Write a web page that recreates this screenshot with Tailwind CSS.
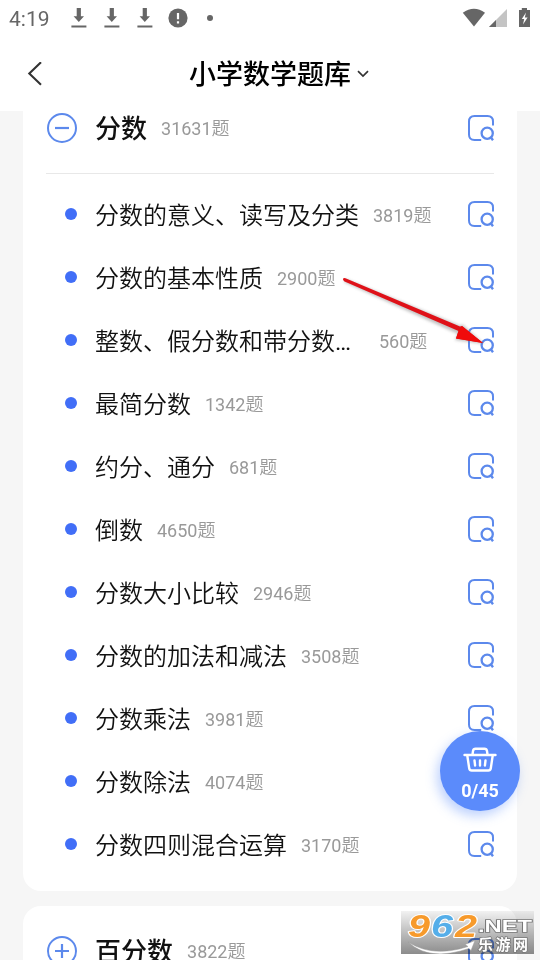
<!DOCTYPE html>
<html lang="zh-CN">
<head>
<meta charset="utf-8">
<title>小学数学题库</title>
<script src="https://cdn.jsdelivr.net/npm/@tailwindcss/browser@4"></script>
</head>
<body class="relative h-[960px] w-[540px] overflow-hidden bg-[#f6f6f6] font-[Roboto,'Noto_Sans_CJK_SC',sans-serif] text-[#111]">
<svg class="hidden">
  <symbol id="search" viewBox="0 0 28 28"><g fill="none" stroke="#5c89ec" stroke-width="2"><path d="M14.2 26H7.5Q2 26 2 20.5V7.5Q2 2 7.5 2H20.5Q26 2 26 7.5V11.5"/><circle cx="20.2" cy="19.2" r="5.6" stroke-width="2.3"/><path d="m23.6 23 2.4 3.2" stroke-width="2.4"/></g></symbol>
  <symbol id="download" viewBox="0 0 16 22"><path d="M5.7 1h4.2v8.2H13L7.8 15 2.6 9.2h3.1zM.4 18.6h15v2H.4z" fill="#666"/></symbol>
</svg>

<header class="flex h-[111px] flex-col bg-white">
  <div class="flex h-9 items-center pl-[9px] pr-[8px] text-[21px] text-[#666]">
    <span class="w-[62px] pt-0.5 leading-9">4:19</span>
    <svg class="mr-[17px] h-[22px] w-4"><use href="#download"/></svg>
    <svg class="mr-[17px] h-[22px] w-4"><use href="#download"/></svg>
    <svg class="mr-[15px] h-[22px] w-4"><use href="#download"/></svg>
    <svg class="h-5 w-5" viewBox="0 0 20 20"><circle cx="10" cy="10" r="9.6" fill="#666"/><path d="M10 5v6.3M10 13.2v2.4" stroke="#fff" stroke-width="2.2"/></svg>
    <i class="ml-[19px] h-[6px] w-[6px] rounded-full bg-[#666]"></i>
    <svg class="ml-auto h-5 w-[70px]" viewBox="0 0 70 20"><path d="M.8 4.8Q12 -3.2 23 4.8L12 18.4z" fill="#666"/><path d="M45 1v18H27z" fill="#c4c4c4"/><path d="M34 12v7h-7z" fill="#666"/><path d="M57 2h2.8V0h5.2v2h3v17H57z" fill="#666"/><path d="M64 4.5 59.8 11h2.4L61 16.5l4.6-7h-2.8z" fill="#fff"/></svg>
  </div>
  <div class="flex h-[75px] items-center pl-[27px]">
    <svg class="h-6 w-4" viewBox="0 0 16 24" fill="none" stroke="#333" stroke-width="2.1"><path d="M14 .2 2.3 11.5 14 22.8"/></svg>
    <h1 class="ml-[146px] pt-0.5 text-[27px] font-medium leading-9 text-black">小学数学题库</h1>
    <svg class="ml-[6px] h-2 w-3" viewBox="0 0 12 8" fill="none" stroke="#333" stroke-width="1.7"><path d="m1 1.2 5 4.8 5-4.8"/></svg>
  </div>
</header>

<main class="mx-[23px] flex flex-col gap-[15px]">
  <section class="h-[780px] rounded-b-[18px] bg-white px-[23px]">
    <div class="flex h-[63px] items-center border-b border-[#e8e8e8] pb-[28px]">
      <svg class="h-8 w-8" viewBox="0 0 32 32" fill="none" stroke="#5c89ec" stroke-width="2"><circle cx="16" cy="16" r="14"/><path d="M9 16h14" stroke-width="2.2"/></svg>
      <h2 class="ml-[17px] pt-0.5 text-[26px] font-medium leading-9">分数</h2>
      <span class="ml-[14px] text-[18px] text-[#999]">31631<span class="font-[350]">题</span></span>
      <svg class="ml-auto -mr-px h-7 w-7"><use href="#search"/></svg>
    </div>
    <ul id="topics" class="pt-[9px]"></ul>
  </section>
  <section class="h-[54px] rounded-t-[18px] bg-white px-[23px] pt-[27px]">
    <div class="flex h-9 items-center">
      <svg class="h-8 w-8" viewBox="0 0 32 32" fill="none" stroke="#5c89ec" stroke-width="2"><circle cx="16" cy="16" r="14"/><path d="M9 16h14M16 9v14" stroke-width="2.2"/></svg>
      <h2 class="ml-[17px] pt-0.5 text-[26px] font-medium leading-9">百分数</h2>
      <span class="ml-[14px] text-[18px] text-[#999]">3822<span class="font-[350]">题</span></span>
      <svg class="ml-auto -mr-px h-7 w-7"><use href="#search"/></svg>
    </div>
  </section>
</main>

<svg class="absolute left-[330px] top-[265px] h-[100px] w-[180px]" viewBox="0 0 180 100">
  <g fill="#777" opacity=".45" style="filter:blur(1.5px)"><path d="m14 17 2-3 115 47 1-2 22 20-29-4 3-6z"/></g>
  <path d="M13 14.5q0-2 2.5-1.3L130 61.5l2-.5L153 78l-27-4.5 2.5-7.5L14 16.2z" fill="#df1118"/>
  <path d="m132 61 21 17-27-4.5 2.5-7.5z" fill="#f00b0b"/>
</svg>

<div class="absolute left-[440px] top-[731px] flex h-20 w-20 flex-col items-center rounded-full bg-[#5b8bfb] pt-4 text-white shadow-[-3px_5px_12px_#5b8bfb66]">
  <svg class="h-[26px] w-[34px]" viewBox="0 0 34 26" fill="none" stroke="#fff" stroke-width="2.4" stroke-linecap="round" stroke-linejoin="round"><path d="M1.5 8h31M4.2 8l2 13.2q.4 2.3 2.5 2.3h16.6q2.1 0 2.5-2.3L29.8 8M9.5 7.5l.5-3.5q.4-2.2 2.5-2.2h9q2.1 0 2.5 2.2l.5 3.5M11.5 13.5l.6 5M17 13.5v5M22.5 13.5l-.6 5"/></svg>
  <span class="mt-[5px] text-[18px] font-bold leading-[26px]">0/45</span>
</div>

<div class="absolute left-[401px] top-[911px] h-[43px] w-[133px] bg-linear-to-b from-[#f2f2f2] to-[#8c8c8c] mix-blend-multiply"></div>
<svg class="absolute left-[401px] top-[911px] h-[43px] w-[133px]" viewBox="0 0 133 43">
  <g font-family="Liberation Sans, sans-serif" font-weight="bold" font-style="italic" font-size="31" stroke="#fff" stroke-width="2" paint-order="stroke" stroke-linejoin="round">
    <text x="7" y="26" textLength="22" lengthAdjust="spacingAndGlyphs" fill="#f79a2b">9</text>
    <text x="30" y="26" textLength="22" lengthAdjust="spacingAndGlyphs" fill="#55aee9">6</text>
    <text x="54" y="26" textLength="22" lengthAdjust="spacingAndGlyphs" fill="#f79a2b">2</text>
  </g>
  <path d="M7 31Q32 47 67 35.5l-3-2 10-4-4 10-2-2Q28 51 7 31" fill="#fff" stroke="#999" stroke-width=".5"/>
  <g fill="#fff" stroke="#777" stroke-width="1.5" paint-order="stroke" font-weight="bold">
    <text x="77" y="21" textLength="54" lengthAdjust="spacingAndGlyphs" font-family="Liberation Sans, sans-serif" font-size="17">.NET</text>
    <text x="77" y="39" textLength="50" font-family="Noto Sans CJK SC, sans-serif" font-size="15">乐游网</text>
  </g>
</svg>

<script>
const topics = [
  ["分数的意义、读写及分类", 3819], ["分数的基本性质", 2900], ["整数、假分数和带分数…", 560],
  ["最简分数", 1342], ["约分、通分", 681], ["倒数", 4650], ["分数大小比较", 2946],
  ["分数的加法和减法", 3508], ["分数乘法", 3981], ["分数除法", 4074], ["分数四则混合运算", 3170]
];
document.getElementById("topics").innerHTML = topics.map(([name, count]) => `
  <li class="flex h-[63px] items-center pl-[19px]">
    <i class="relative -top-px h-3 w-3 rounded-full bg-[#416ef7]"></i>
    <span class="ml-[18px] pt-0.5 text-[24px] font-[350] leading-9 ${name.endsWith("…") ? "w-[270px]" : ""}">${name.replace("…", '<span class="font-normal">…</span>')}</span>
    <span class="ml-[14px] pt-0.5 text-[18px] text-[#999]">${count}<span class="font-[350]">题</span></span>
    <svg class="relative -top-px ml-auto -mr-px h-7 w-7"><use href="#search"/></svg>
  </li>`).join("");
</script>
</body>
</html>
